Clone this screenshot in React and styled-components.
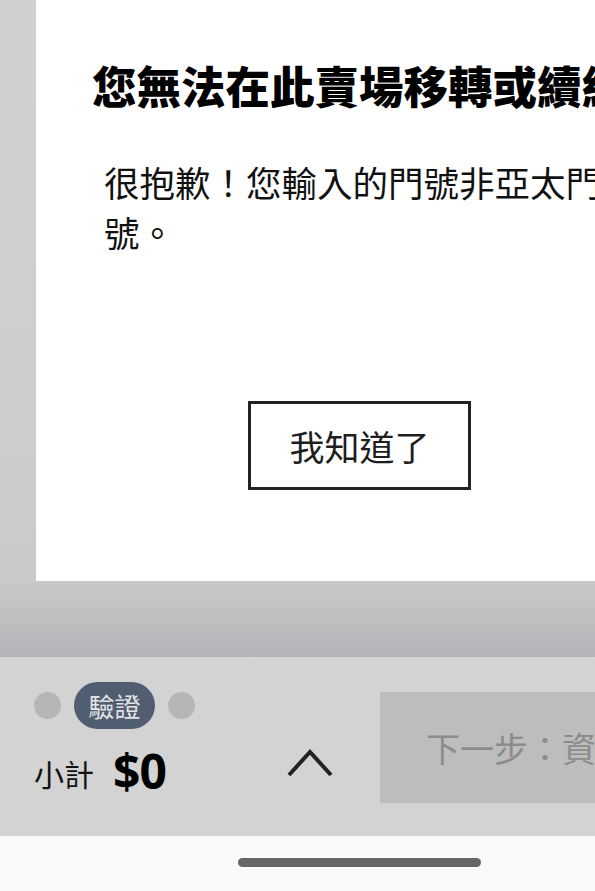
import React from "react";
import styled, { createGlobalStyle } from "styled-components";

const Global = createGlobalStyle`
  html, body { margin: 0; padding: 0; }
  body {
    width: 595px;
    height: 891px;
    overflow: hidden;
    font-family: "Noto Sans CJK TC", "Noto Sans", sans-serif;
    background: #fafafa;
  }
`;

const Screen = styled.div`
  width: 595px;
  height: 891px;
  display: flex;
  flex-direction: column;
  overflow: hidden;
`;

const Overlay = styled.div`
  height: 657px;
  flex: none;
  background: linear-gradient(to bottom, #d0d0d0 0%, #cecece 60%, #cacacb 88%, #c8c9ca 88.5%, #b4b5b8 100%);
  padding-left: 36px;
  box-sizing: border-box;
`;

const Modal = styled.div`
  width: 647px;
  height: 581px;
  background: #ffffff;
  box-sizing: border-box;
  padding: 59px 0 0 56px;
  display: flex;
  flex-direction: column;
`;

const Title = styled.h2`
  margin: 0;
  font-size: 44.5px;
  line-height: 52px;
  font-weight: 800;
  color: #000;
  white-space: nowrap;
`;

const Body = styled.p`
  margin: 46px 0 0 12px;
  width: 515px;
  font-size: 35.5px;
  line-height: 50px;
  font-weight: 400;
  color: #111;
`;

const OkButton = styled.button`
  align-self: flex-start;
  margin: 144px 0 0 156px;
  width: 223px;
  height: 89px;
  box-sizing: border-box;
  border: 3.5px solid #222;
  background: #fff;
  font-family: "Noto Sans CJK TC", "Noto Sans", sans-serif;
  font-size: 35px;
  font-weight: 400;
  color: #1e1e1e;
  padding: 0;
  display: flex;
  align-items: center;
  justify-content: center;
`;

const BottomBar = styled.div`
  height: 179px;
  flex: none;
  background: #d3d3d3;
  display: flex;
  align-items: center;
  box-sizing: border-box;
  padding-left: 34px;
`;

const Summary = styled.div`
  display: flex;
  flex-direction: column;
  gap: 18px;
  width: 240px;
  flex: none;
  margin-top: -16px;
`;

const Steps = styled.div`
  display: flex;
  align-items: center;
  gap: 13px;
`;

const Dot = styled.span`
  width: 27px;
  height: 27px;
  border-radius: 50%;
  background: #b6b6b6;
`;

const StepPill = styled.span`
  width: 81px;
  height: 47px;
  border-radius: 24px;
  background: #515e72;
  color: #e4e4e4;
  font-size: 26px;
  display: flex;
  align-items: center;
  justify-content: center;
  line-height: 1;
`;

const Subtotal = styled.div`
  display: flex;
  align-items: center;
  gap: 19px;
`;

const SubLabel = styled.span`
  font-size: 30px;
  color: #111;
  line-height: 1;
  margin-top: 4px;
`;

const Amount = styled.span`
  font-family: "Noto Sans", sans-serif;
  font-size: 48px;
  font-weight: 700;
  color: #000;
  line-height: 1;
  letter-spacing: -1px;
`;

const Toggle = styled.div`
  width: 106px;
  flex: none;
  display: flex;
  justify-content: flex-start;
  padding-left: 12px;
  box-sizing: border-box;
  margin-top: 30px;
`;

const NextButton = styled.div`
  flex: none;
  width: 300px;
  height: 111px;
  background: #bdbdbd;
  color: #8c8c8c;
  font-size: 34px;
  display: flex;
  align-items: center;
  padding-left: 46px;
  box-sizing: border-box;
  white-space: nowrap;
  margin-top: 2px;
`;

const HomeArea = styled.div`
  flex: 1;
  background: #fafafa;
  display: flex;
  padding: 22px 0 0 238px;
  box-sizing: border-box;
`;

const HomeBar = styled.div`
  width: 243px;
  height: 9px;
  border-radius: 5px;
  background: #666;
`;

export default function App() {
  return (
    <>
      <Global />
      <Screen>
        <Overlay>
          <Modal>
            <Title>您無法在此賣場移轉或續約</Title>
            <Body>很抱歉！您輸入的門號非亞太門號。</Body>
            <OkButton>我知道了</OkButton>
          </Modal>
        </Overlay>
        <BottomBar>
          <Summary>
            <Steps>
              <Dot />
              <StepPill>驗證</StepPill>
              <Dot />
            </Steps>
            <Subtotal>
              <SubLabel>小計</SubLabel>
              <Amount>$0</Amount>
            </Subtotal>
          </Summary>
          <Toggle>
            <svg width="48" height="32" viewBox="0 0 48 32">
              <path d="M3 29 L24 6 L45 29" fill="none" stroke="#222" strokeWidth="4" />
            </svg>
          </Toggle>
          <NextButton>下一步：資料填寫</NextButton>
        </BottomBar>
        <HomeArea>
          <HomeBar />
        </HomeArea>
      </Screen>
    </>
  );
}
